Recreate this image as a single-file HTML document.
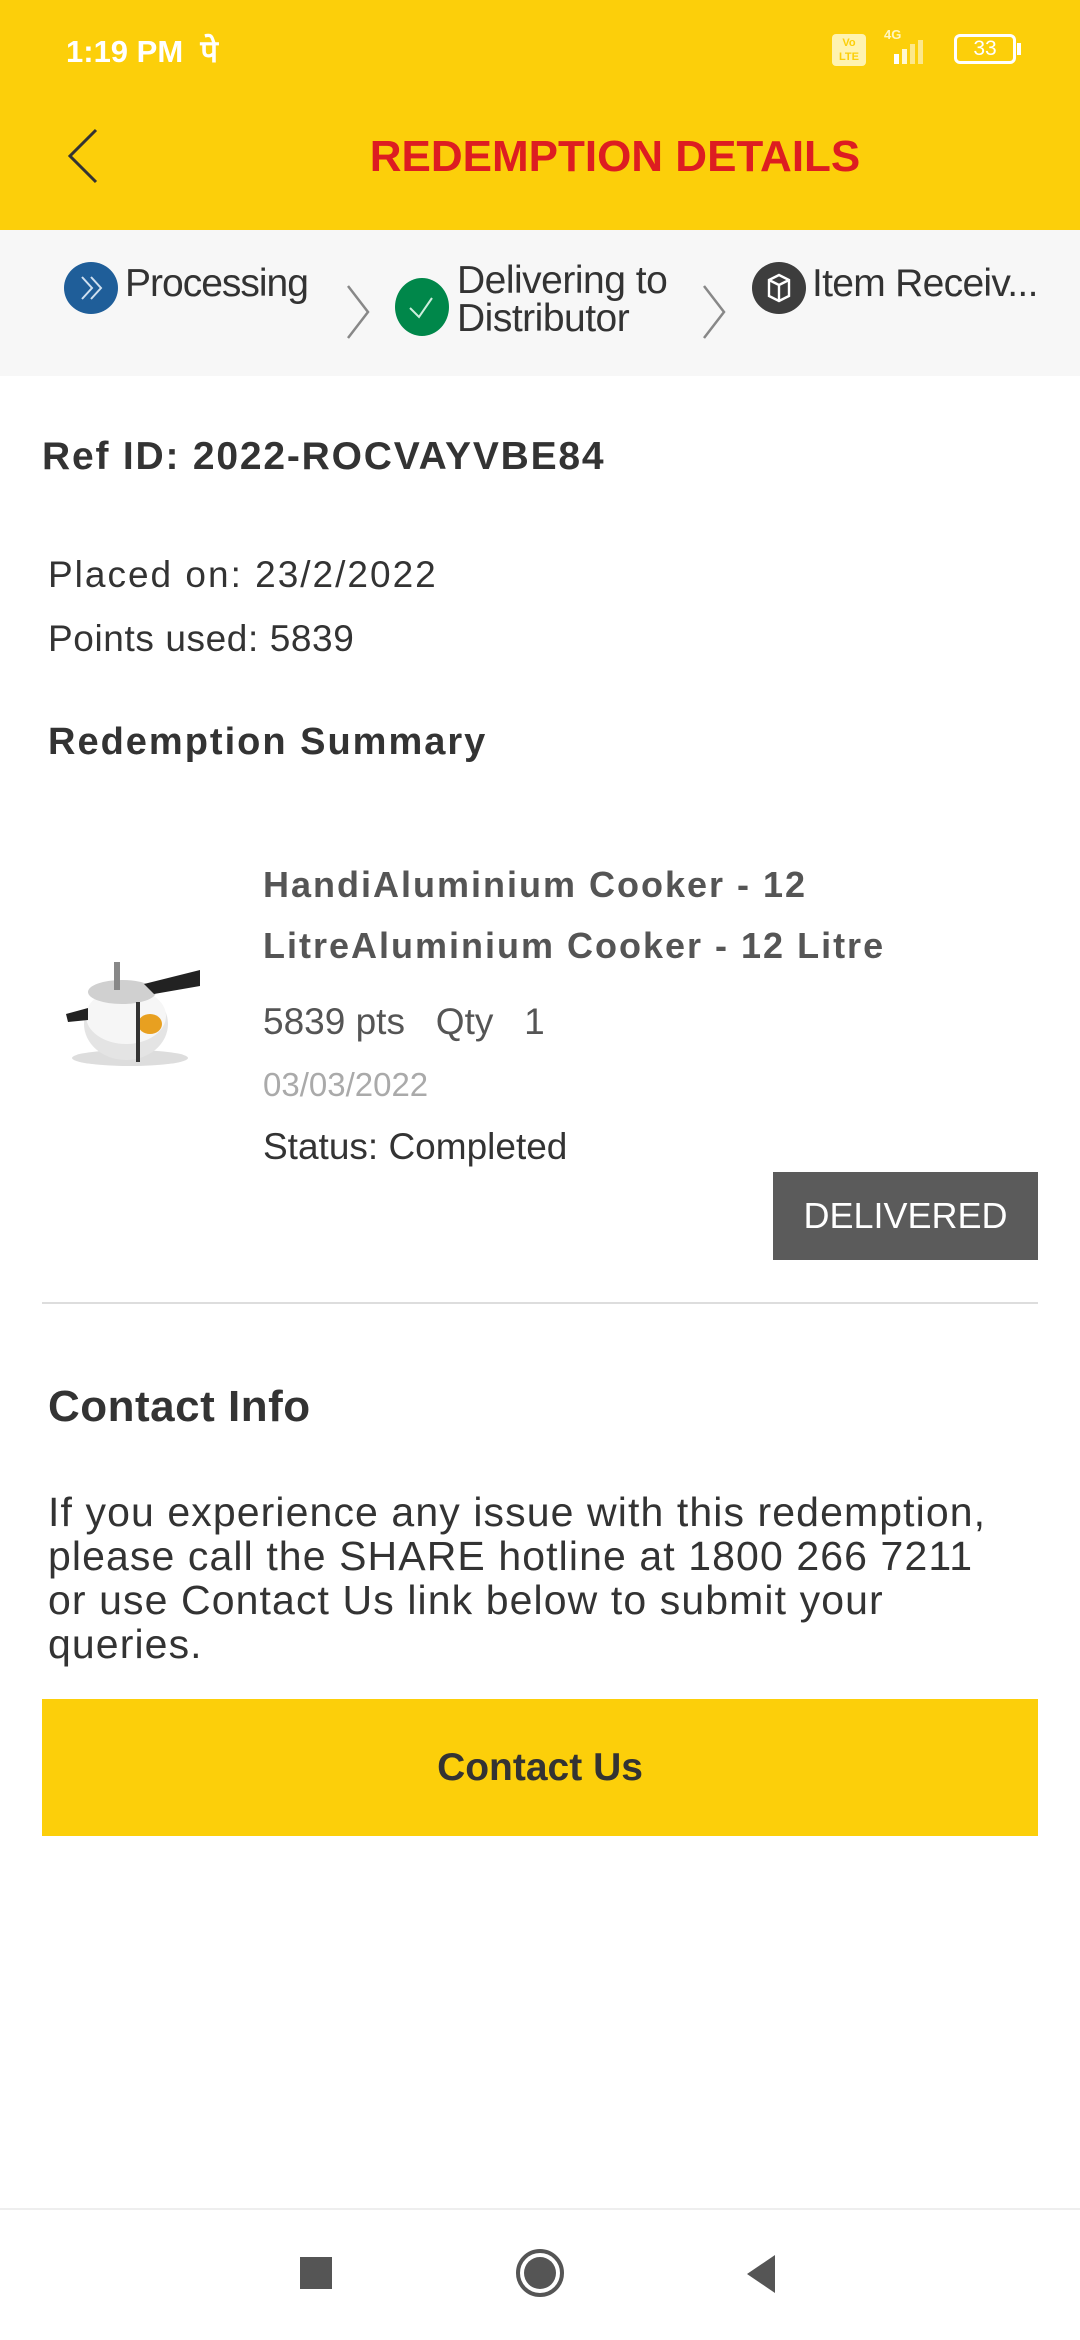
<!DOCTYPE html>
<html><head><meta charset="utf-8"><style>
*{margin:0;padding:0;box-sizing:border-box}
body{width:1080px;height:2340px;position:relative;background:#fff;font-family:"Liberation Sans","Noto Sans CJK SC",sans-serif;color:#333;overflow:hidden}
.a{position:absolute;white-space:nowrap}
.b{font-weight:bold}
</style></head><body>
<div class="a" style="left:0;top:0;width:1080px;height:230px;background:#fccf0a"></div>
<div class="a b" style="left:66px;top:30px;font-size:31px;color:#fff">1:19 PM&nbsp; पे</div>
<div class="a" style="left:832px;top:34px;width:34px;height:32px;border-radius:4px;background:#fff3b0;font-size:11px;color:#fccf0a;text-align:center;line-height:14px;font-weight:bold;padding-top:2px">Vo<br>LTE</div>
<div class="a b" style="left:884px;top:27px;font-size:13px;color:#fff6c0">4G</div>
<svg class="a" style="left:880px;top:40px" width="56" height="26"><rect x="14" y="14" width="5" height="10" fill="#fff"/><rect x="22" y="9" width="5" height="15" fill="#fff8d0"/><rect x="30" y="4" width="5" height="20" fill="#fde88a"/><rect x="38" y="0" width="5" height="24" fill="#fde88a"/></svg>
<div class="a" style="left:954px;top:34px;width:62px;height:30px;border:3px solid #fff;border-radius:6px;color:#fff;font-size:21px;text-align:center;line-height:24px">33</div>
<div class="a" style="left:1017px;top:43px;width:4px;height:12px;background:#fff"></div>
<svg class="a" style="left:64px;top:126px" width="40" height="60"><path d="M32 4 L6 30 L32 56" fill="none" stroke="#333" stroke-width="3"/></svg>
<div class="a b" style="left:0;width:1080px;text-align:center;top:132px;font-size:44px;color:#dd1d21;padding-left:150px">REDEMPTION DETAILS</div>

<div class="a" style="left:0;top:230px;width:1080px;height:146px;background:#f7f7f7"></div>
<svg class="a" style="left:64px;top:262px" width="56" height="52"><ellipse cx="27" cy="26" rx="27" ry="26" fill="#1f5e99"/><path d="M18 15 L28 26 L18 37 M27 15 L37 26 L27 37" fill="none" stroke="#cfe0f0" stroke-width="2"/></svg>
<div class="a" style="left:125px;top:262px;font-size:39px;color:#333;letter-spacing:-1px">Processing</div>
<svg class="a" style="left:344px;top:282px" width="30" height="60"><path d="M4 4 L24 30 L4 56" fill="none" stroke="#888" stroke-width="2.5"/></svg>
<svg class="a" style="left:395px;top:278px" width="56" height="58"><ellipse cx="27" cy="29" rx="27" ry="29" fill="#00874a"/><path d="M15 30 L24 39 L37 20" fill="none" stroke="#cdeedd" stroke-width="2"/></svg>
<div class="a" style="left:457px;top:262px;font-size:39px;color:#333;line-height:38px;white-space:normal;letter-spacing:-0.5px">Delivering to<br>Distributor</div>
<svg class="a" style="left:700px;top:282px" width="30" height="60"><path d="M4 4 L24 30 L4 56" fill="none" stroke="#888" stroke-width="2.5"/></svg>
<svg class="a" style="left:752px;top:262px" width="56" height="52"><ellipse cx="27" cy="26" rx="27" ry="26" fill="#3d3d3d"/><path d="M17 18 L27 13 L37 18 L37 34 L27 39 L17 34 Z M17 18 L27 23 L37 18 M27 23 L27 39" fill="none" stroke="#fff" stroke-width="2.4"/></svg>
<div class="a" style="left:812px;top:262px;font-size:39px;color:#333;letter-spacing:-0.7px">Item Receiv...</div>

<div class="a b" style="left:42px;top:435px;font-size:39px;color:#333;letter-spacing:1.8px">Ref ID: 2022-ROCVAYVBE84</div>
<div class="a" style="left:48px;top:554px;font-size:37px;color:#333;letter-spacing:2px">Placed on: 23/2/2022</div>
<div class="a" style="left:48px;top:618px;font-size:37px;color:#333;letter-spacing:0.6px">Points used: 5839</div>
<div class="a b" style="left:48px;top:721px;font-size:38px;color:#333;letter-spacing:2px">Redemption Summary</div>

<svg class="a" style="left:64px;top:958px" width="144" height="112"><ellipse cx="66" cy="100" rx="58" ry="8" fill="#ddd"/><ellipse cx="62" cy="66" rx="42" ry="36" fill="#e4e4e4"/><ellipse cx="62" cy="58" rx="40" ry="28" fill="#f6f6f6"/><ellipse cx="58" cy="34" rx="34" ry="12" fill="#d0d0d0"/><path d="M80 26 L136 12 L136 28 L90 36Z" fill="#222"/><rect x="50" y="4" width="6" height="28" fill="#888"/><path d="M2 56 L24 50 L24 62 L4 64Z" fill="#222"/><ellipse cx="86" cy="66" rx="12" ry="10" fill="#e8a020"/><rect x="72" y="44" width="4" height="60" fill="#333"/></svg>

<div class="a b" style="left:263px;top:854px;font-size:36px;color:#555;line-height:61px;letter-spacing:2px">HandiAluminium Cooker - 12<br>LitreAluminium Cooker - 12 Litre</div>
<div class="a" style="left:263px;top:1001px;font-size:37px;color:#555">5839 pts&nbsp;&nbsp; Qty&nbsp;&nbsp; 1</div>
<div class="a" style="left:263px;top:1066px;font-size:33px;color:#aaa">03/03/2022</div>
<div class="a" style="left:263px;top:1126px;font-size:37px;color:#333">Status: Completed</div>
<div class="a" style="left:773px;top:1172px;width:265px;height:88px;background:#5b5b5b;color:#fff;font-size:36px;text-align:center;line-height:88px">DELIVERED</div>
<div class="a" style="left:42px;top:1302px;width:996px;height:2px;background:#ddd"></div>

<div class="a b" style="left:48px;top:1382px;font-size:44px;color:#333;letter-spacing:0.5px">Contact Info</div>
<div class="a" style="left:48px;top:1490px;font-size:41px;color:#333;line-height:44px;letter-spacing:1.1px">If you experience any issue with this redemption,<br>please call the SHARE hotline at 1800 266 7211<br>or use Contact Us link below to submit your<br>queries.</div>
<div class="a b" style="left:42px;top:1699px;width:996px;height:137px;background:#fccf0a;color:#333;font-size:39px;text-align:center;line-height:137px">Contact Us</div>

<div class="a" style="left:0;top:2208px;width:1080px;height:2px;background:#eee"></div>
<div class="a" style="left:300px;top:2257px;width:32px;height:32px;background:#555"></div>
<svg class="a" style="left:514px;top:2247px" width="52" height="52"><circle cx="26" cy="26" r="22" fill="none" stroke="#555" stroke-width="4"/><circle cx="26" cy="26" r="16" fill="#555"/></svg>
<svg class="a" style="left:743px;top:2253px" width="36" height="42"><path d="M32 2 L32 40 L4 21Z" fill="#555"/></svg>
</body></html>
